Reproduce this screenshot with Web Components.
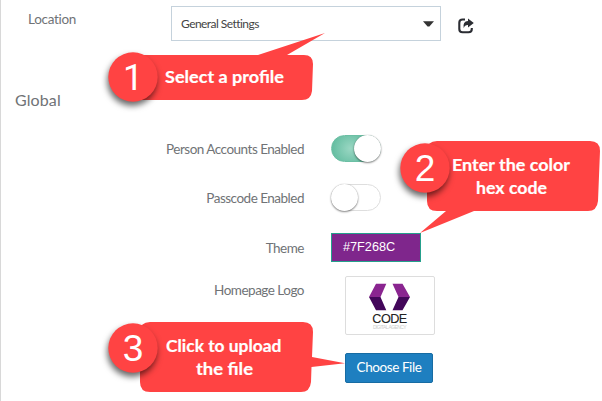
<!DOCTYPE html>
<html lang="en"><head><meta charset="utf-8"><title>Settings</title>
<style>
html,body{margin:0;padding:0;background:#fff;overflow:hidden}
body{font-family:Lato,"Liberation Sans",sans-serif;color:#707376;font-variant-ligatures:none}
</style></head><body>
<settings-page></settings-page>
<script>
function define(name, html, setup){
  customElements.define(name, class extends HTMLElement{
    constructor(){
      super();
      const t=document.createElement('template');
      t.innerHTML=html;
      this.attachShadow({mode:'open'}).append(t.content.cloneNode(true));
    }
    connectedCallback(){ if(setup) setup(this,this.shadowRoot); }
  });
}
define('profile-select',`<style>
:host{display:flex;box-sizing:border-box;width:270px;height:35px;border:1px solid #c5d2dc;align-items:center;justify-content:space-between;padding:0 6px 0 9px;font-size:12px;letter-spacing:-.55px;color:#444;background:#fff}
svg{display:block}
</style><slot></slot><svg width="11" height="6"><path d="M0 .3H11L6.4 5.4H4.6Z" fill="#333"/></svg>`);
define('share-icon',`<style>:host{display:block;width:16px;height:16px}svg{display:block}</style>
<svg width="16" height="16" viewBox="0 0 16 16"><path d="M7 1.5H4.6Q1.3 1.5 1.3 4.8V11Q1.3 14.3 4.6 14.3H10.5Q13.8 14.3 13.8 11V10" fill="none" stroke="#2b2d33" stroke-width="2.1"/><path d="M10 .5L15.8 5L10 9.6V7Q6.8 6.8 5.7 10.2Q4.5 3.4 10 3.1Z" fill="#2b2d33"/></svg>`);
define('toggle-switch',`<style>
:host{display:flex;box-sizing:border-box;width:50px;height:27px;border-radius:14px;border:1px solid #dedede;background:#fff}
:host([on]){justify-content:flex-end;border-color:#6cbfa4;background:radial-gradient(circle at 38% 50%,#9ad7c3,#66bea2 55%)}
i{display:block;flex:none;width:27px;height:27px;margin:-1px;border-radius:50%;background:#fff;box-shadow:0 1px 2px #0007,0 0 1px #0004}
</style><i></i>`);
define('color-field',`<style>
:host{display:flex;box-sizing:border-box;width:90px;height:29px;border:1px solid #25a08c;background:#7f268c;color:#fff;align-items:center;padding:0 0 2px 11px;font:12.7px "Liberation Sans",Arial,sans-serif;letter-spacing:0}
</style><slot></slot>`);
define('logo-preview',`<style>
:host{display:block;box-sizing:border-box;width:90px;height:59px;margin-left:14px;border:1px solid #ddd;border-radius:2px}
svg{display:block}
</style><svg width="88" height="57" viewBox="346 277 88 57">
<path d="M376 283.7H386.3L380.5 297H369Z M402.5 283.7H392.5L398.5 297H410Z" fill="#8a2590"/>
<path d="M369 297H380.5L386.3 310.3H376Z M410 297H398.5L392.5 310.3H402.5Z" fill="#43075a"/>
<text x="372.3" y="323.3" textLength="34.5" lengthAdjust="spacingAndGlyphs" font-family="Liberation Sans" font-size="12" fill="#222" stroke="#222" stroke-width=".1">CODE</text>
<text x="373" y="329" textLength="33" lengthAdjust="spacingAndGlyphs" font-family="Liberation Sans" font-size="4.6" fill="#ccc">DIGITAL AGENCY</text></svg>`);
define('file-button',`<style>
:host{display:flex;box-sizing:border-box;width:88px;height:30px;margin-left:14px;border:1px solid #176ca3;border-radius:2px;background:#1e7fc0;color:#fff;align-items:center;justify-content:center;font-size:13.5px;letter-spacing:-.42px;padding-bottom:2px}
</style><slot></slot>`);
define('form-row',`<style>
:host{display:grid;grid-template-columns:304px 1fr;column-gap:27px;align-items:center;font-size:13.5px;line-height:16px;letter-spacing:-.5px}
:host([top]){align-items:start}
:host([top]) span{padding-top:6px}
span{text-align:right;white-space:nowrap}
</style><span></span><div><slot></slot></div>`,(el,r)=>{r.querySelector('span').textContent=el.getAttribute('label')||'';});
define('step-callout',`<style>
:host{position:absolute;left:0;top:0;width:602px;height:401px}
svg{display:block;overflow:visible}
circle{filter:drop-shadow(-1px 4px 3px #0009)}
text{fill:#fff}
.n{font:37px "Liberation Sans",Arial,sans-serif;text-anchor:middle}
.n.one{font:36px Roboto,sans-serif}
.t{font:bold 17px Lato,"Open Sans",sans-serif;stroke:#fff;stroke-width:.2px}
</style><svg width="602" height="401"><path fill="#ff4343"/><circle r="24.7" fill="#ff4343"/><text class="n"></text></svg>`,(el,r)=>{
  const svg=r.querySelector('svg'),c=r.querySelector('circle'),n=r.querySelector('.n');
  r.querySelector('path').setAttribute('d',el.getAttribute('shape'));
  const [x,y]=el.getAttribute('badge').split(' ').map(Number);
  c.setAttribute('cx',x);c.setAttribute('cy',y);
  n.setAttribute('x',x);n.setAttribute('y',y+13);n.textContent=el.getAttribute('step');
  if(n.textContent==='1') n.classList.add('one');
  for(const line of el.getAttribute('lines').split('|')){
    const [lx,ly,w,s]=line.split(',');
    const t=document.createElementNS('http://www.w3.org/2000/svg','text');
    t.setAttribute('class','t');t.setAttribute('x',lx);t.setAttribute('y',ly);
    t.setAttribute('textLength',w);t.setAttribute('lengthAdjust','spacingAndGlyphs');
    t.textContent=s;svg.append(t);
  }
});
define('settings-page',`<style>
:host{display:block;position:relative;box-sizing:border-box;width:602px;height:401px;overflow:hidden;background:#fff;border-left:1px solid #d8d8d8}
main{margin-left:-1px}
.top{display:grid;grid-template-columns:143px 270px 16px;padding:6px 0 0 28px;align-items:start}
.top label{font-size:13.5px;letter-spacing:-.3px;line-height:16px;padding-top:5px}
share-icon{margin:12px 0 0 17px}
h2{font-weight:400;font-size:16px;line-height:20px;margin:49px 0 0 15px;letter-spacing:.1px}
.form{padding-top:25px}
.g1,.g2{margin-top:22px}
.g3{margin-top:14px}
.g4{margin-top:18px}
.layer{position:absolute;left:-1px;top:0}
</style>
<main>
<div class="top"><label>Location</label><profile-select>General Settings</profile-select><share-icon></share-icon></div>
<h2>Global</h2>
<div class="form">
<form-row label="Person Accounts Enabled"><toggle-switch on></toggle-switch></form-row>
<form-row class="g1" label="Passcode Enabled"><toggle-switch></toggle-switch></form-row>
<form-row class="g2" label="Theme"><color-field>#7F268C</color-field></form-row>
<form-row class="g3" top label="Homepage Logo"><logo-preview></logo-preview></form-row>
<form-row class="g4"><file-button>Choose File</file-button></form-row>
</div></main>
<div class="layer">
<step-callout step="1" badge="133 77" lines="165,82.5,119,Select a profile" shape="M130 55H258L325 33L287 55H304Q313 55 313 64L312 91Q311 100 302 100H130Q120 100 120 90V65Q120 55 130 55Z"></step-callout>
<step-callout step="2" badge="425 168" lines="452,171,118,Enter the color|476,194,71,hex code" shape="M437 141H590Q600 141 600 151L598 201Q597 211 588 211H474L420 233L446 211H437Q427 211 427 201V151Q427 141 437 141Z"></step-callout>
<step-callout step="3" badge="133 348" lines="166,351.5,115.5,Click to upload|196,374.5,57,the file" shape="M150 322H303Q313 322 313 332L312 357L345 363.3L311.500 367L311 382Q310 392 301 392H150Q140 392 140 382V332Q140 322 150 322Z"></step-callout>
</div>`);
</script></body></html>
